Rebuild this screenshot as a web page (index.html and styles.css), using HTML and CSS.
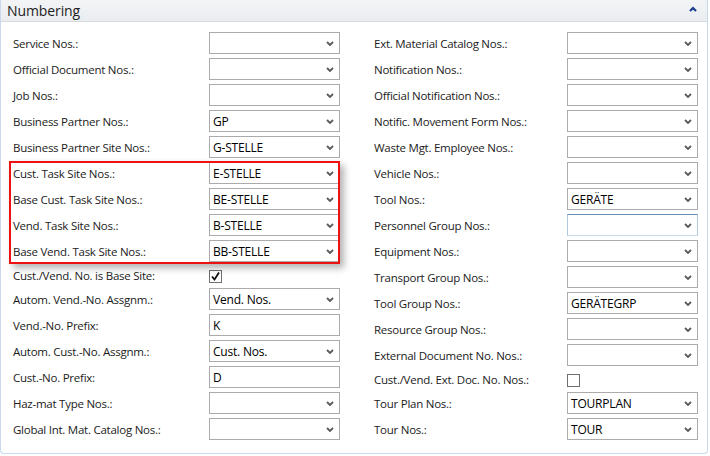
FILE: index.html
```html
<!DOCTYPE html>
<html>
<head>
<meta charset="utf-8">
<link rel="stylesheet" href="styles.css">
</head>
<body>
<div class="panel">
  <div class="header">
    <span class="title">Numbering</span>
    <svg class="collapse" width="8" height="6" viewBox="0 0 8 6"><polyline points="1,5 4,2 7,5" fill="none" stroke="#1a3c8c" stroke-width="2.2"/></svg>
  </div>
  <div class="content">
    <div class="col col-left">
      <div class="row"><span class="label">Service Nos.:</span><div class="field dd"><span class="val"></span><svg class="chev" width="8" height="5" viewBox="0 0 8 5"><polyline points="1,1 4,4 7,1" fill="none" stroke="#5a5a5a" stroke-width="1.8"/></svg></div></div>
      <div class="row"><span class="label">Official Document Nos.:</span><div class="field dd"><span class="val"></span><svg class="chev" width="8" height="5" viewBox="0 0 8 5"><polyline points="1,1 4,4 7,1" fill="none" stroke="#5a5a5a" stroke-width="1.8"/></svg></div></div>
      <div class="row"><span class="label">Job Nos.:</span><div class="field dd"><span class="val"></span><svg class="chev" width="8" height="5" viewBox="0 0 8 5"><polyline points="1,1 4,4 7,1" fill="none" stroke="#5a5a5a" stroke-width="1.8"/></svg></div></div>
      <div class="row"><span class="label">Business Partner Nos.:</span><div class="field dd"><span class="val">GP</span><svg class="chev" width="8" height="5" viewBox="0 0 8 5"><polyline points="1,1 4,4 7,1" fill="none" stroke="#5a5a5a" stroke-width="1.8"/></svg></div></div>
      <div class="row"><span class="label">Business Partner Site Nos.:</span><div class="field dd"><span class="val">G-STELLE</span><svg class="chev" width="8" height="5" viewBox="0 0 8 5"><polyline points="1,1 4,4 7,1" fill="none" stroke="#5a5a5a" stroke-width="1.8"/></svg></div></div>
      <div class="highlight">
        <div class="row"><span class="label">Cust. Task Site Nos.:</span><div class="field dd"><span class="val">E-STELLE</span><svg class="chev" width="8" height="5" viewBox="0 0 8 5"><polyline points="1,1 4,4 7,1" fill="none" stroke="#5a5a5a" stroke-width="1.8"/></svg></div></div>
        <div class="row"><span class="label">Base Cust. Task Site Nos.:</span><div class="field dd"><span class="val">BE-STELLE</span><svg class="chev" width="8" height="5" viewBox="0 0 8 5"><polyline points="1,1 4,4 7,1" fill="none" stroke="#5a5a5a" stroke-width="1.8"/></svg></div></div>
        <div class="row"><span class="label">Vend. Task Site Nos.:</span><div class="field dd"><span class="val">B-STELLE</span><svg class="chev" width="8" height="5" viewBox="0 0 8 5"><polyline points="1,1 4,4 7,1" fill="none" stroke="#5a5a5a" stroke-width="1.8"/></svg></div></div>
        <div class="row"><span class="label">Base Vend. Task Site Nos.:</span><div class="field dd"><span class="val">BB-STELLE</span><svg class="chev" width="8" height="5" viewBox="0 0 8 5"><polyline points="1,1 4,4 7,1" fill="none" stroke="#5a5a5a" stroke-width="1.8"/></svg></div></div>
      </div>
      <div class="row row-check"><span class="label">Cust./Vend. No. is Base Site:</span><div class="check"><svg width="11" height="11" viewBox="0 0 11 11"><polyline points="2,5.5 4.5,8.5 9,1.5" fill="none" stroke="#111" stroke-width="1.8"/></svg></div></div>
      <div class="row"><span class="label">Autom. Vend.-No. Assgnm.:</span><div class="field dd"><span class="val">Vend. Nos.</span><svg class="chev" width="8" height="5" viewBox="0 0 8 5"><polyline points="1,1 4,4 7,1" fill="none" stroke="#5a5a5a" stroke-width="1.8"/></svg></div></div>
      <div class="row"><span class="label">Vend.-No. Prefix:</span><div class="field"><span class="val">K</span></div></div>
      <div class="row"><span class="label">Autom. Cust.-No. Assgnm.:</span><div class="field dd"><span class="val">Cust. Nos.</span><svg class="chev" width="8" height="5" viewBox="0 0 8 5"><polyline points="1,1 4,4 7,1" fill="none" stroke="#5a5a5a" stroke-width="1.8"/></svg></div></div>
      <div class="row"><span class="label">Cust.-No. Prefix:</span><div class="field"><span class="val">D</span></div></div>
      <div class="row"><span class="label">Haz-mat Type Nos.:</span><div class="field dd"><span class="val"></span><svg class="chev" width="8" height="5" viewBox="0 0 8 5"><polyline points="1,1 4,4 7,1" fill="none" stroke="#5a5a5a" stroke-width="1.8"/></svg></div></div>
      <div class="row"><span class="label">Global Int. Mat. Catalog Nos.:</span><div class="field dd"><span class="val"></span><svg class="chev" width="8" height="5" viewBox="0 0 8 5"><polyline points="1,1 4,4 7,1" fill="none" stroke="#5a5a5a" stroke-width="1.8"/></svg></div></div>
    </div>
    <div class="col col-right">
      <div class="row"><span class="label">Ext. Material Catalog Nos.:</span><div class="field dd"><span class="val"></span><svg class="chev" width="8" height="5" viewBox="0 0 8 5"><polyline points="1,1 4,4 7,1" fill="none" stroke="#5a5a5a" stroke-width="1.8"/></svg></div></div>
      <div class="row"><span class="label">Notification Nos.:</span><div class="field dd"><span class="val"></span><svg class="chev" width="8" height="5" viewBox="0 0 8 5"><polyline points="1,1 4,4 7,1" fill="none" stroke="#5a5a5a" stroke-width="1.8"/></svg></div></div>
      <div class="row"><span class="label">Official Notification Nos.:</span><div class="field dd"><span class="val"></span><svg class="chev" width="8" height="5" viewBox="0 0 8 5"><polyline points="1,1 4,4 7,1" fill="none" stroke="#5a5a5a" stroke-width="1.8"/></svg></div></div>
      <div class="row"><span class="label">Notific. Movement Form Nos.:</span><div class="field dd"><span class="val"></span><svg class="chev" width="8" height="5" viewBox="0 0 8 5"><polyline points="1,1 4,4 7,1" fill="none" stroke="#5a5a5a" stroke-width="1.8"/></svg></div></div>
      <div class="row"><span class="label">Waste Mgt. Employee Nos.:</span><div class="field dd"><span class="val"></span><svg class="chev" width="8" height="5" viewBox="0 0 8 5"><polyline points="1,1 4,4 7,1" fill="none" stroke="#5a5a5a" stroke-width="1.8"/></svg></div></div>
      <div class="row"><span class="label">Vehicle Nos.:</span><div class="field dd"><span class="val"></span><svg class="chev" width="8" height="5" viewBox="0 0 8 5"><polyline points="1,1 4,4 7,1" fill="none" stroke="#5a5a5a" stroke-width="1.8"/></svg></div></div>
      <div class="row"><span class="label">Tool Nos.:</span><div class="field dd"><span class="val">GERÄTE</span><svg class="chev" width="8" height="5" viewBox="0 0 8 5"><polyline points="1,1 4,4 7,1" fill="none" stroke="#5a5a5a" stroke-width="1.8"/></svg></div></div>
      <div class="row"><span class="label">Personnel Group Nos.:</span><div class="field dd focused"><span class="val"></span><svg class="chev" width="8" height="5" viewBox="0 0 8 5"><polyline points="1,1 4,4 7,1" fill="none" stroke="#5a5a5a" stroke-width="1.8"/></svg></div></div>
      <div class="row"><span class="label">Equipment Nos.:</span><div class="field dd"><span class="val"></span><svg class="chev" width="8" height="5" viewBox="0 0 8 5"><polyline points="1,1 4,4 7,1" fill="none" stroke="#5a5a5a" stroke-width="1.8"/></svg></div></div>
      <div class="row"><span class="label">Transport Group Nos.:</span><div class="field dd"><span class="val"></span><svg class="chev" width="8" height="5" viewBox="0 0 8 5"><polyline points="1,1 4,4 7,1" fill="none" stroke="#5a5a5a" stroke-width="1.8"/></svg></div></div>
      <div class="row"><span class="label">Tool Group Nos.:</span><div class="field dd"><span class="val">GERÄTEGRP</span><svg class="chev" width="8" height="5" viewBox="0 0 8 5"><polyline points="1,1 4,4 7,1" fill="none" stroke="#5a5a5a" stroke-width="1.8"/></svg></div></div>
      <div class="row"><span class="label">Resource Group Nos.:</span><div class="field dd"><span class="val"></span><svg class="chev" width="8" height="5" viewBox="0 0 8 5"><polyline points="1,1 4,4 7,1" fill="none" stroke="#5a5a5a" stroke-width="1.8"/></svg></div></div>
      <div class="row"><span class="label">External Document No. Nos.:</span><div class="field dd"><span class="val"></span><svg class="chev" width="8" height="5" viewBox="0 0 8 5"><polyline points="1,1 4,4 7,1" fill="none" stroke="#5a5a5a" stroke-width="1.8"/></svg></div></div>
      <div class="row row-check"><span class="label">Cust./Vend. Ext. Doc. No. Nos.:</span><div class="check"></div></div>
      <div class="row"><span class="label">Tour Plan Nos.:</span><div class="field dd"><span class="val">TOURPLAN</span><svg class="chev" width="8" height="5" viewBox="0 0 8 5"><polyline points="1,1 4,4 7,1" fill="none" stroke="#5a5a5a" stroke-width="1.8"/></svg></div></div>
      <div class="row"><span class="label">Tour Nos.:</span><div class="field dd"><span class="val">TOUR</span><svg class="chev" width="8" height="5" viewBox="0 0 8 5"><polyline points="1,1 4,4 7,1" fill="none" stroke="#5a5a5a" stroke-width="1.8"/></svg></div></div>
    </div>
  </div>
</div>
</body>
</html>
```
FILE: styles.css
```css
html, body {
  margin: 0;
  padding: 0;
  background: #ffffff;
}
body {
  font-family: "Open Sans", "Noto Sans", sans-serif;
  color: #1b1b1b;
}
.panel {
  width: 706px;
  height: 453px;
  border: 1px solid #c9d8ea;
  border-top: none;
  border-radius: 0 0 4px 4px;
  overflow: hidden;
}
.header {
  height: 21px;
  display: flex;
  align-items: center;
  justify-content: space-between;
  padding: 0 10px 0 6px;
  background: linear-gradient(#f3f4f6, #eaedf0);
  border-bottom: 1px solid #d6dbe0;
}
.title {
  font-size: 14px;
  color: #222;
  letter-spacing: -0.1px;
}
.collapse {
  margin-top: -3px;
}
.content {
  display: flex;
  padding: 10px 0 0 12px;
  gap: 34px;
}
.col {
  display: flex;
  flex-direction: column;
  gap: 4px;
}
.col-left {
  width: 327px;
}
.col-right {
  width: 324px;
}
.row {
  display: flex;
  align-items: center;
  height: 22px;
}
.row-check {
  height: 18px;
  align-items: flex-start;
}
.label {
  flex: 1;
  font-size: 11.5px;
  letter-spacing: -0.25px;
  white-space: nowrap;
}
.row-check .label {
  line-height: 20px;
}
.field {
  width: 121px;
  height: 20px;
  border: 1px solid #ababab;
  display: flex;
  align-items: center;
  justify-content: space-between;
  padding: 0 5px 0 3px;
  box-sizing: content-box;
}
.val {
  font-size: 12px;
  color: #000;
  letter-spacing: -0.2px;
}
.chev {
  display: block;
  margin-top: 1px;
}
.focused {
  border-color: #b2c6dc;
  border-top-color: #6a8db4;
  border-bottom-color: #c8dcf0;
}
.check {
  width: 11px;
  height: 11px;
  margin-top: 4px;
  border: 1px solid #6f6f6f;
  display: flex;
  align-items: center;
  justify-content: center;
  margin-right: 118px;
}
.highlight {
  position: relative;
  display: flex;
  flex-direction: column;
  gap: 4px;
}
.highlight::after {
  content: "";
  position: absolute;
  left: -4px;
  right: 0;
  top: -1px;
  bottom: -2px;
  border: 2px solid #ee1111;
  box-shadow: 4px 4px 7px rgba(0, 0, 0, 0.3);
  pointer-events: none;
}
```
